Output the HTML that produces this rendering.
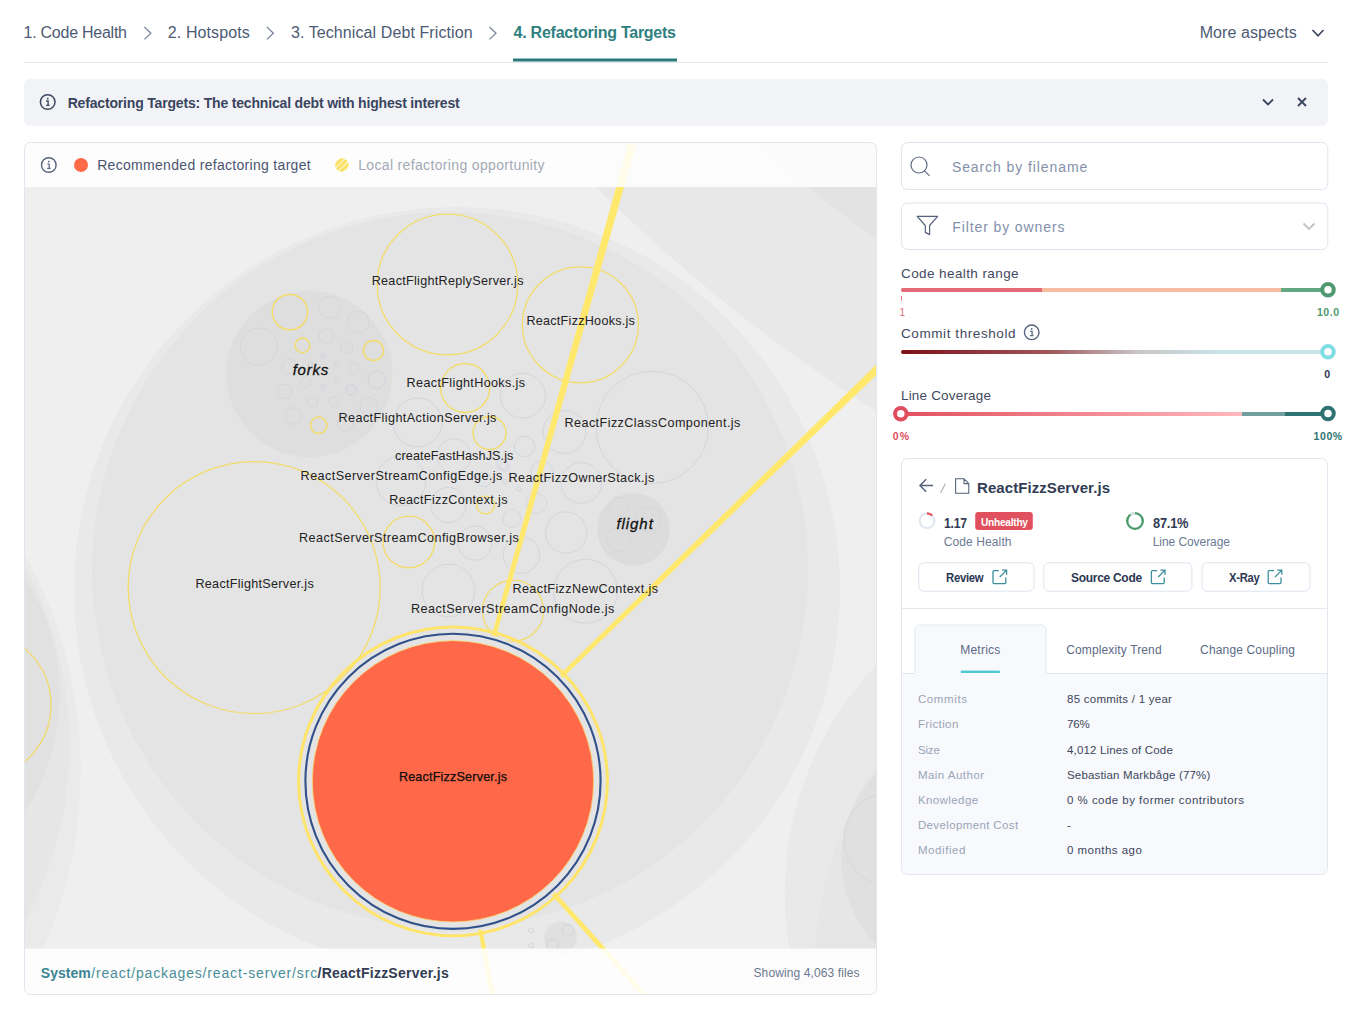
<!DOCTYPE html>
<html><head><meta charset="utf-8">
<style>
html,body{margin:0;padding:0;background:#fff;width:1352px;height:1030px;overflow:hidden;}
body{position:relative;font-family:'Liberation Sans',sans-serif;}
.t{position:absolute;white-space:pre;line-height:1;}
.abs{position:absolute;box-sizing:border-box;}
svg{position:absolute;left:0;top:0;}
</style></head><body>
<svg width="1352" height="1030" viewBox="0 0 1352 1030"><defs><clipPath id="vc"><rect x="25" y="143" width="851" height="851" rx="5"/></clipPath><pattern id="hatch" width="4.2" height="4.2" patternUnits="userSpaceOnUse" patternTransform="rotate(45)"><rect width="4.2" height="4.2" fill="#fbf0b6"/><rect width="2.4" height="4.2" fill="#fbe05a"/></pattern><linearGradient id="g2" x1="0" x2="1"><stop offset="0" stop-color="#7c1117"/><stop offset="0.35" stop-color="#a0585c"/><stop offset="0.55" stop-color="#c8c4c6"/><stop offset="0.75" stop-color="#c8e4e8"/><stop offset="1" stop-color="#c8e4e8"/></linearGradient><linearGradient id="g3" x1="0" x2="1"><stop offset="0" stop-color="#e2505f"/><stop offset="1" stop-color="#ffb8bd"/></linearGradient></defs>
<g clip-path="url(#vc)">
<rect x="25" y="143" width="851" height="851" fill="#efefef"/>
<circle cx="-366.7" cy="770" r="447.4" fill="#eaeaea"/>
<circle cx="-302.9" cy="744" r="372.7" fill="#e6e6e6"/>
<circle cx="-155.9" cy="695" r="215.7" fill="#e1e1e1"/>
<circle cx="-22.7" cy="705" r="73.7" fill="none" stroke="#f2da6a" stroke-width="1.3"/>
<circle cx="1753" cy="-975" r="1640" fill="#e8e8e8"/>
<circle cx="1753" cy="-975" r="1498" fill="#e3e3e3"/>
<circle cx="1116.1" cy="893.8" r="331.4" fill="#e9e9e9"/>
<circle cx="1225.2" cy="983.6" r="412.5" fill="#e6e6e6"/>
<circle cx="965.2" cy="858.9" r="123.9" fill="#e0e0e0"/>
<circle cx="891.7" cy="839.4" r="47.5" fill="none" stroke="#d5d6da" stroke-width="1"/>
<circle cx="457" cy="590" r="383" fill="#e9e9e9"/>
<circle cx="450" cy="570" r="358" fill="#e4e4e4"/>
<circle cx="309.4" cy="374" r="83" fill="#dedede"/>
<circle cx="633.5" cy="529.3" r="36.3" fill="#dcdcdc"/>
<circle cx="560.4" cy="937.7" r="16.3" fill="#e0e0e0"/>
<circle cx="329.4" cy="307.3" r="11" fill="none" stroke="#d3d6dd" stroke-width="1"/>
<circle cx="358.2" cy="322.1" r="11" fill="none" stroke="#d3d6dd" stroke-width="1"/>
<circle cx="258.8" cy="346.5" r="18.5" fill="none" stroke="#d3d6dd" stroke-width="1"/>
<circle cx="326" cy="335.9" r="7.3" fill="none" stroke="#d3d6dd" stroke-width="1"/>
<circle cx="346.9" cy="347.6" r="6" fill="none" stroke="#d3d6dd" stroke-width="1"/>
<circle cx="323.1" cy="356" r="2.4" fill="none" stroke="#d3d6dd" stroke-width="1"/>
<circle cx="336.7" cy="363.4" r="2.3" fill="none" stroke="#d3d6dd" stroke-width="1"/>
<circle cx="310.3" cy="364.3" r="2.5" fill="none" stroke="#d3d6dd" stroke-width="1"/>
<circle cx="289.4" cy="366.5" r="7.5" fill="none" stroke="#d3d6dd" stroke-width="1"/>
<circle cx="354.6" cy="368.7" r="5.5" fill="none" stroke="#d3d6dd" stroke-width="1"/>
<circle cx="376.8" cy="379.8" r="8.8" fill="none" stroke="#d3d6dd" stroke-width="1"/>
<circle cx="305.8" cy="382" r="5" fill="none" stroke="#d3d6dd" stroke-width="1"/>
<circle cx="336.7" cy="379.4" r="2.3" fill="none" stroke="#d3d6dd" stroke-width="1"/>
<circle cx="323.1" cy="387.1" r="2.4" fill="none" stroke="#d3d6dd" stroke-width="1"/>
<circle cx="351.3" cy="389.8" r="5.2" fill="none" stroke="#d3d6dd" stroke-width="1"/>
<circle cx="284.8" cy="391.4" r="7.3" fill="none" stroke="#d3d6dd" stroke-width="1"/>
<circle cx="312.7" cy="402" r="5" fill="none" stroke="#d3d6dd" stroke-width="1"/>
<circle cx="333.8" cy="401.6" r="5" fill="none" stroke="#d3d6dd" stroke-width="1"/>
<circle cx="368.8" cy="406.4" r="8.9" fill="none" stroke="#d3d6dd" stroke-width="1"/>
<circle cx="293.2" cy="416" r="8.3" fill="none" stroke="#d3d6dd" stroke-width="1"/>
<circle cx="345.5" cy="423.1" r="8" fill="none" stroke="#d3d6dd" stroke-width="1"/>
<circle cx="377" cy="380" r="8.6" fill="none" stroke="#d3d6dd" stroke-width="1"/>
<circle cx="351.4" cy="390" r="5.2" fill="none" stroke="#d3d6dd" stroke-width="1"/>
<circle cx="522.9" cy="395.6" r="22.5" fill="none" stroke="#d3d6dd" stroke-width="1"/>
<circle cx="417.7" cy="422.5" r="24.4" fill="none" stroke="#d3d6dd" stroke-width="1"/>
<circle cx="564.5" cy="432" r="21.4" fill="none" stroke="#d3d6dd" stroke-width="1"/>
<circle cx="652.2" cy="427.3" r="56.2" fill="none" stroke="#d3d6dd" stroke-width="1"/>
<circle cx="524.6" cy="446.6" r="10.3" fill="none" stroke="#d3d6dd" stroke-width="1"/>
<circle cx="454" cy="455.8" r="17" fill="none" stroke="#d3d6dd" stroke-width="1"/>
<circle cx="502.3" cy="464" r="5.2" fill="none" stroke="#d3d6dd" stroke-width="1"/>
<circle cx="581.2" cy="482.9" r="20.3" fill="none" stroke="#d3d6dd" stroke-width="1"/>
<circle cx="541.7" cy="471.6" r="10.7" fill="none" stroke="#d3d6dd" stroke-width="1"/>
<circle cx="401" cy="481" r="24.9" fill="none" stroke="#d3d6dd" stroke-width="1"/>
<circle cx="483.8" cy="479.5" r="7.4" fill="none" stroke="#d3d6dd" stroke-width="1"/>
<circle cx="505.3" cy="481.7" r="2.2" fill="none" stroke="#d3d6dd" stroke-width="1"/>
<circle cx="518.6" cy="489" r="2.2" fill="none" stroke="#d3d6dd" stroke-width="1"/>
<circle cx="448.5" cy="505" r="17.6" fill="none" stroke="#d3d6dd" stroke-width="1"/>
<circle cx="536.3" cy="503.6" r="10.3" fill="none" stroke="#d3d6dd" stroke-width="1"/>
<circle cx="511.8" cy="518.6" r="9" fill="none" stroke="#d3d6dd" stroke-width="1"/>
<circle cx="566.2" cy="532.5" r="20.7" fill="none" stroke="#d3d6dd" stroke-width="1"/>
<circle cx="474.9" cy="543.1" r="17" fill="none" stroke="#d3d6dd" stroke-width="1"/>
<circle cx="521.4" cy="555" r="18.2" fill="none" stroke="#d3d6dd" stroke-width="1"/>
<circle cx="448.5" cy="590.5" r="26.4" fill="none" stroke="#d3d6dd" stroke-width="1"/>
<circle cx="585.5" cy="591.2" r="32" fill="none" stroke="#d3d6dd" stroke-width="1"/>
<circle cx="504.3" cy="466.2" r="4.7" fill="none" stroke="#d3d6dd" stroke-width="1"/>
<circle cx="618.6" cy="506.4" r="9.2" fill="none" stroke="#d3d6dd" stroke-width="1"/>
<circle cx="648.5" cy="519" r="12.2" fill="none" stroke="#d3d6dd" stroke-width="1"/>
<circle cx="618.6" cy="539.3" r="12.2" fill="none" stroke="#d3d6dd" stroke-width="1"/>
<circle cx="568" cy="930.4" r="6" fill="none" stroke="#d3d6dd" stroke-width="1"/>
<circle cx="552.3" cy="945" r="5.8" fill="none" stroke="#d3d6dd" stroke-width="1"/>
<circle cx="531.2" cy="930.4" r="2.4" fill="none" stroke="#d3d6dd" stroke-width="1"/>
<circle cx="531.2" cy="945.8" r="2.4" fill="none" stroke="#d3d6dd" stroke-width="1"/>
<circle cx="447.5" cy="284.5" r="70.3" fill="none" stroke="#f3dc6b" stroke-width="1.3"/>
<circle cx="580.4" cy="324.8" r="58" fill="none" stroke="#f3dc6b" stroke-width="1.3"/>
<circle cx="254.2" cy="587.6" r="126" fill="none" stroke="#f3dc6b" stroke-width="1.3"/>
<circle cx="289.9" cy="312.1" r="17.7" fill="none" stroke="#f3dc6b" stroke-width="1.5"/>
<circle cx="302.5" cy="345.4" r="7.3" fill="none" stroke="#f3dc6b" stroke-width="1.5"/>
<circle cx="373.5" cy="350.5" r="10" fill="none" stroke="#f3dc6b" stroke-width="1.5"/>
<circle cx="318.7" cy="425.3" r="8.2" fill="none" stroke="#f3dc6b" stroke-width="1.5"/>
<circle cx="465.2" cy="388" r="24.5" fill="none" stroke="#f3dc6b" stroke-width="1.4"/>
<circle cx="489.5" cy="433" r="16.5" fill="none" stroke="#f3dc6b" stroke-width="1.4"/>
<circle cx="485.5" cy="505" r="8.9" fill="none" stroke="#f3dc6b" stroke-width="1.4"/>
<circle cx="408.8" cy="541.9" r="25.8" fill="none" stroke="#f3dc6b" stroke-width="1.4"/>
<circle cx="513" cy="610.7" r="30.5" fill="none" stroke="#f3dc6b" stroke-width="1.3"/>
<polygon points="454.64,781.76 728.62,-179.98 718.81,-182.74 451.36,780.84" fill="#ffe86c"/>
<polygon points="454.19,782.52 1173.51,87.83 1166.40,80.52 451.81,780.08" fill="#ffe86c"/>
<polygon points="451.33,781.61 629.19,1765.67 639.23,1763.82 454.67,780.99" fill="#ffe86c"/>
<polygon points="451.73,782.43 1116.26,1529.70 1123.86,1522.90 454.27,780.17" fill="#ffe86c"/>
<circle cx="453" cy="781.3" r="154.4" fill="none" stroke="#ffe46a" stroke-width="3"/>
<circle cx="453" cy="781.3" r="151" fill="#e4e4e4"/>
<circle cx="453" cy="781.3" r="147.6" fill="none" stroke="#30518a" stroke-width="2.1"/>
<circle cx="453" cy="781.3" r="140.6" fill="#ff6848" stroke="#f7d36a" stroke-width="0.8"/>
</g>
<rect x="25" y="143" width="851" height="44" fill="#ffffff" fill-opacity="0.86"/>
<rect x="25" y="948.5" width="851" height="46" fill="#ffffff" fill-opacity="0.86"/>
<rect x="24.5" y="142.5" width="852" height="852" rx="6" fill="none" stroke="#e1e6ee" stroke-width="1"/>
<circle cx="48.8" cy="165" r="7.3" fill="none" stroke="#56637c" stroke-width="1.4"/>
<circle cx="48.8" cy="161.6" r="0.9" fill="#56637c"/><path d="M47.3 164 H49.2 V168.2 M47.2 168.4 H50.6" fill="none" stroke="#56637c" stroke-width="1.2"/>
<circle cx="81" cy="165" r="7" fill="#ff6a48"/>
<circle cx="341.9" cy="165" r="6.8" fill="url(#hatch)"/><path d="M144.39999999999998 27 L150.89999999999998 33.2 L144.39999999999998 39.4" fill="none" stroke="#7c879b" stroke-width="1.3"/>
<path d="M266.9 27 L273.4 33.2 L266.9 39.4" fill="none" stroke="#7c879b" stroke-width="1.3"/>
<path d="M489.5 27 L496.0 33.2 L489.5 39.4" fill="none" stroke="#7c879b" stroke-width="1.3"/>
<rect x="513" y="58.5" width="164" height="3" fill="#2b7a7b"/>
<rect x="24" y="62" width="1304" height="1" fill="#e3e8f0"/>
<path d="M1312.5 30 L1318 35.8 L1323.5 30" fill="none" stroke="#3d4860" stroke-width="1.7"/>
<rect x="24" y="79" width="1304" height="47" rx="6" fill="#f1f3f7"/>
<circle cx="47.7" cy="102" r="7.3" fill="none" stroke="#3d4860" stroke-width="1.5"/>
<circle cx="47.7" cy="98.6" r="0.95" fill="#3d4860"/><path d="M46.2 101 H48.1 V105.2 M46.1 105.4 H49.5" fill="none" stroke="#3d4860" stroke-width="1.3"/>
<path d="M1263 99.5 L1268 104.5 L1273 99.5" fill="none" stroke="#3a4560" stroke-width="1.8"/>
<path d="M1298 98 L1306 106 M1306 98 L1298 106" fill="none" stroke="#3a4560" stroke-width="1.8"/>
<rect x="901.5" y="142.5" width="426.3" height="47" rx="6" fill="#fff" stroke="#dfe4ee"/>
<circle cx="919" cy="165" r="8" fill="none" stroke="#5f6b84" stroke-width="1.2"/>
<path d="M924.6 170.8 L929.6 175.8" stroke="#5f6b84" stroke-width="1.2"/>
<rect x="901.5" y="203" width="426.3" height="46.5" rx="6" fill="#fff" stroke="#dfe4ee"/>
<path d="M917.2 216.3 H937.6 L929.6 225.5 V234.6 L925.3 232.4 V225.5 Z" fill="none" stroke="#56637c" stroke-width="1.2" stroke-linejoin="round"/>
<path d="M1303.5 223.5 L1309 229 L1314.5 223.5" fill="none" stroke="#c2c2c2" stroke-width="1.8"/>
<rect x="901" y="288" width="427" height="4" rx="2" fill="#f6bda1"/>
<rect x="901" y="288" width="141" height="4" rx="2" fill="#e46a78"/><rect x="1038" y="288" width="4" height="4" fill="#e46a78"/>
<rect x="1281" y="288" width="47" height="4" fill="#62a77f"/>
<rect x="901" y="296" width="1" height="4.5" fill="#e46a78"/>
<circle cx="1328" cy="289.7" r="5.75" fill="#fff" stroke="#4e9a6e" stroke-width="4"/>
<rect x="901" y="350" width="427" height="4" rx="2" fill="url(#g2)"/>
<circle cx="1328" cy="351.8" r="5.75" fill="#fff" stroke="#80dde3" stroke-width="4"/>
<circle cx="1031.7" cy="332.3" r="7.3" fill="none" stroke="#56637c" stroke-width="1.4"/>
<circle cx="1031.7" cy="328.9" r="0.9" fill="#56637c"/><path d="M1030.2 331.3 H1032.1 V335.5 M1030.1 335.7 H1033.5" fill="none" stroke="#56637c" stroke-width="1.2"/>
<rect x="901" y="412" width="341" height="4" fill="url(#g3)"/>
<rect x="1242" y="412" width="43" height="4" fill="#72a0a0"/>
<rect x="1285" y="412" width="43" height="4" fill="#2e7474"/>
<circle cx="900.8" cy="413.8" r="5.75" fill="#fff" stroke="#e04e5e" stroke-width="4"/>
<circle cx="1328" cy="413.6" r="5.75" fill="#fff" stroke="#2e7272" stroke-width="4"/>
<rect x="901.5" y="458.5" width="426" height="416" rx="6" fill="#fff" stroke="#e1e6ef"/>
<path d="M902 673.5 H1327 V868 a6 6 0 0 1 -6 6 H908 a6 6 0 0 1 -6 -6 Z" fill="#f8f9fc"/>
<rect x="901" y="608" width="427" height="1" fill="#e3e8f0"/>
<path d="M915 673 V630 a5 5 0 0 1 5 -5 H1041 a5 5 0 0 1 5 5 V673" fill="#f8f9fc" stroke="#e1e6ef"/>
<path d="M901.5 673.5 H915 M1046 673.5 H1327" stroke="#e1e6ef"/>
<rect x="960.8" y="670.6" width="39" height="2.4" fill="#4ec8cf"/>
<path d="M920 485.5 H933 M926.2 479.3 L920 485.5 L926.2 491.7" fill="none" stroke="#56637c" stroke-width="1.5"/>
<path d="M945.5 483.5 L940.5 493" stroke="#a9b0be" stroke-width="1.1"/>
<path d="M955.6 478.8 H964 L968.8 483.6 V493.3 H955.6 Z M964 478.8 V483.6 H968.8" fill="none" stroke="#56637c" stroke-width="1.1" stroke-linejoin="round"/>
<circle cx="927" cy="520.7" r="7.4" fill="none" stroke="#e3e8f0" stroke-width="2.2"/>
<path d="M927 513.3 A7.4 7.4 0 0 1 932.2 515.5" fill="none" stroke="#e5525e" stroke-width="2.2"/>
<circle cx="1135" cy="521" r="7.8" fill="none" stroke="#4a9a6a" stroke-width="2.3"/>
<path d="M1130.5 514.6 A7.8 7.8 0 0 1 1135 513.2" fill="none" stroke="#e3e8f0" stroke-width="2.3"/>
<rect x="975.2" y="512" width="57.6" height="18" rx="3" fill="#e0505e"/>
<rect x="918.8" y="562.8" width="115.20000000000005" height="28.4" rx="5" fill="#fff" stroke="#dfe4ee"/>
<rect x="1043.8" y="562.8" width="148.10000000000014" height="28.4" rx="5" fill="#fff" stroke="#dfe4ee"/>
<rect x="1202.0" y="562.8" width="107.90000000000009" height="28.4" rx="5" fill="#fff" stroke="#dfe4ee"/>
<path d="M998.8 570.6 H994.0 a1 1 0 0 0 -1 1 V582.6 a1 1 0 0 0 1 1 H1004.8 a1 1 0 0 0 1 -1 V577.5 M999.8 577 L1006.4 570.4 M1002.0 570.2 H1006.5999999999999 V574.8" fill="none" stroke="#3d8f9b" stroke-width="1.3"/>
<path d="M1157.2 570.6 H1152.4 a1 1 0 0 0 -1 1 V582.6 a1 1 0 0 0 1 1 H1163.2 a1 1 0 0 0 1 -1 V577.5 M1158.2 577 L1164.8 570.4 M1160.4 570.2 H1165.0 V574.8" fill="none" stroke="#3d8f9b" stroke-width="1.3"/>
<path d="M1274 570.6 H1269.2 a1 1 0 0 0 -1 1 V582.6 a1 1 0 0 0 1 1 H1280 a1 1 0 0 0 1 -1 V577.5 M1275 577 L1281.6 570.4 M1277.2 570.2 H1281.8 V574.8" fill="none" stroke="#3d8f9b" stroke-width="1.3"/></svg>
<div class="t" style="left:23.50px;top:25.00px;font-size:16px;color:#4d5a73;letter-spacing:-0.249px;">1. Code Health</div>
<div class="t" style="left:167.80px;top:25.00px;font-size:16px;color:#4d5a73;letter-spacing:0.106px;">2. Hotspots</div>
<div class="t" style="left:290.90px;top:25.00px;font-size:16px;color:#4d5a73;letter-spacing:0.094px;">3. Technical Debt Friction</div>
<div class="t" style="left:513.60px;top:25.00px;font-size:16px;color:#2f7f80;letter-spacing:-0.255px;font-weight:700;">4. Refactoring Targets</div>
<div class="t" style="left:1199.70px;top:25.00px;font-size:16px;color:#4d5a73;letter-spacing:0.087px;">More aspects</div>
<div class="t" style="left:67.70px;top:96.00px;font-size:14px;color:#3a4560;letter-spacing:-0.178px;font-weight:700;">Refactoring Targets: The technical debt with highest interest</div>
<div class="t" style="left:97.20px;top:158.00px;font-size:14px;color:#4a5670;letter-spacing:0.304px;">Recommended refactoring target</div>
<div class="t" style="left:358.20px;top:158.00px;font-size:14px;color:#a3a9b6;letter-spacing:0.344px;">Local refactoring opportunity</div>
<div class="t" style="left:40.80px;top:966.00px;font-size:14px;color:#3b8592;letter-spacing:0.037px;font-weight:700;">System</div>
<div class="t" style="left:91.20px;top:966.00px;font-size:14px;color:#4a8e99;letter-spacing:0.840px;">/react/packages/react-server/src</div>
<div class="t" style="left:317.50px;top:966.00px;font-size:14px;color:#313c52;letter-spacing:0.241px;font-weight:700;">/ReactFizzServer.js</div>
<div class="t" style="left:753.50px;top:967.00px;font-size:12px;color:#6b7890;letter-spacing:0.107px;">Showing 4,063 files</div>
<div class="t" style="left:371.70px;top:275.00px;font-size:12.6px;color:#222222;letter-spacing:0.288px;">ReactFlightReplyServer.js</div>
<div class="t" style="left:526.40px;top:315.00px;font-size:12.6px;color:#222222;letter-spacing:0.264px;">ReactFizzHooks.js</div>
<div class="t" style="left:292.70px;top:362.00px;font-size:15px;color:#111111;letter-spacing:0.746px;font-style:italic;-webkit-text-stroke:0.3px #111;">forks</div>
<div class="t" style="left:406.60px;top:377.00px;font-size:12.6px;color:#222222;letter-spacing:0.356px;">ReactFlightHooks.js</div>
<div class="t" style="left:338.60px;top:412.00px;font-size:12.6px;color:#222222;letter-spacing:0.404px;">ReactFlightActionServer.js</div>
<div class="t" style="left:564.50px;top:417.00px;font-size:12.6px;color:#222222;letter-spacing:0.428px;">ReactFizzClassComponent.js</div>
<div class="t" style="left:395.10px;top:450.00px;font-size:12.6px;color:#222222;letter-spacing:0.117px;">createFastHashJS.js</div>
<div class="t" style="left:300.60px;top:470.00px;font-size:12.6px;color:#222222;letter-spacing:0.438px;">ReactServerStreamConfigEdge.js</div>
<div class="t" style="left:508.50px;top:472.00px;font-size:12.6px;color:#222222;letter-spacing:0.411px;">ReactFizzOwnerStack.js</div>
<div class="t" style="left:389.20px;top:494.00px;font-size:12.6px;color:#222222;letter-spacing:0.351px;">ReactFizzContext.js</div>
<div class="t" style="left:616.50px;top:516.00px;font-size:15px;color:#111111;letter-spacing:0.922px;font-style:italic;-webkit-text-stroke:0.3px #111;">flight</div>
<div class="t" style="left:299.00px;top:532.00px;font-size:12.6px;color:#222222;letter-spacing:0.460px;">ReactServerStreamConfigBrowser.js</div>
<div class="t" style="left:195.40px;top:578.00px;font-size:12.6px;color:#222222;letter-spacing:0.295px;">ReactFlightServer.js</div>
<div class="t" style="left:512.40px;top:583.00px;font-size:12.6px;color:#222222;letter-spacing:0.405px;">ReactFizzNewContext.js</div>
<div class="t" style="left:410.90px;top:603.00px;font-size:12.6px;color:#222222;letter-spacing:0.473px;">ReactServerStreamConfigNode.js</div>
<div class="t" style="left:398.90px;top:771.00px;font-size:12.6px;color:#0c0c0c;letter-spacing:0.183px;-webkit-text-stroke:0.25px #0c0c0c;">ReactFizzServer.js</div>
<div class="t" style="left:951.90px;top:160.00px;font-size:14px;color:#8390ab;letter-spacing:0.915px;">Search by filename</div>
<div class="t" style="left:952.20px;top:220.00px;font-size:14px;color:#8390ab;letter-spacing:0.899px;">Filter by owners</div>
<div class="t" style="left:901.00px;top:267.00px;font-size:13.5px;color:#3f4a60;letter-spacing:0.407px;">Code health range</div>
<div class="t" style="left:901.00px;top:327.00px;font-size:13.5px;color:#3f4a60;letter-spacing:0.580px;">Commit threshold</div>
<div class="t" style="left:901.00px;top:389.00px;font-size:13.5px;color:#3f4a60;letter-spacing:0.182px;">Line Coverage</div>
<div class="t" style="left:899.60px;top:308.00px;font-size:10px;color:#e46a78;">1</div>
<div class="t" style="left:1317.00px;top:307.00px;font-size:10.5px;color:#4e9a6e;letter-spacing:0.521px;font-weight:700;">10.0</div>
<div class="t" style="left:1324.30px;top:369.00px;font-size:10.5px;color:#2d3650;font-weight:700;">0</div>
<div class="t" style="left:892.80px;top:431.00px;font-size:10.5px;color:#e04e5e;letter-spacing:1.000px;font-weight:700;">0%</div>
<div class="t" style="left:1313.60px;top:431.00px;font-size:10.5px;color:#2e7474;letter-spacing:0.580px;font-weight:700;">100%</div>
<div class="t" style="left:977.00px;top:480.00px;font-size:15px;color:#323c55;letter-spacing:0.074px;font-weight:700;">ReactFizzServer.js</div>
<div class="t" style="left:943.80px;top:515.00px;font-size:15px;color:#323c55;letter-spacing:-0.300px;transform:scaleX(0.8162);transform-origin:0 0;font-weight:700;">1.17</div>
<div class="t" style="left:980.70px;top:517.00px;font-size:11px;color:#ffffff;letter-spacing:-0.300px;transform:scaleX(0.9254);transform-origin:0 0;font-weight:700;">Unhealthy</div>
<div class="t" style="left:943.80px;top:536.00px;font-size:12px;color:#6c7a94;letter-spacing:0.098px;">Code Health</div>
<div class="t" style="left:1152.70px;top:515.00px;font-size:15px;color:#323c55;letter-spacing:-0.300px;transform:scaleX(0.8586);transform-origin:0 0;font-weight:700;">87.1%</div>
<div class="t" style="left:1152.70px;top:536.00px;font-size:12px;color:#6c7a94;letter-spacing:-0.064px;">Line Coverage</div>
<div class="t" style="left:946.30px;top:572.00px;font-size:12px;color:#2c3752;letter-spacing:-0.300px;transform:scaleX(0.9458);transform-origin:0 0;font-weight:700;">Review</div>
<div class="t" style="left:1071.00px;top:572.00px;font-size:12px;color:#2c3752;letter-spacing:-0.292px;font-weight:700;">Source Code</div>
<div class="t" style="left:1229.20px;top:572.00px;font-size:12px;color:#2c3752;letter-spacing:-0.300px;transform:scaleX(0.9325);transform-origin:0 0;font-weight:700;">X-Ray</div>
<div class="t" style="left:960.20px;top:644.00px;font-size:12px;color:#5b6a85;letter-spacing:0.238px;">Metrics</div>
<div class="t" style="left:1066.20px;top:644.00px;font-size:12px;color:#5b6a85;letter-spacing:0.135px;">Complexity Trend</div>
<div class="t" style="left:1200.10px;top:644.00px;font-size:12px;color:#5b6a85;letter-spacing:0.154px;">Change Coupling</div>
<div class="t" style="left:917.90px;top:694.00px;font-size:11.5px;color:#9aa4b8;letter-spacing:0.621px;">Commits</div>
<div class="t" style="left:1067.00px;top:694.00px;font-size:11.5px;color:#3c465c;letter-spacing:0.253px;">85 commits / 1 year</div>
<div class="t" style="left:917.90px;top:719.00px;font-size:11.5px;color:#9aa4b8;letter-spacing:0.385px;">Friction</div>
<div class="t" style="left:1067.00px;top:719.00px;font-size:11.5px;color:#3c465c;letter-spacing:-0.166px;">76%</div>
<div class="t" style="left:917.90px;top:745.00px;font-size:11.5px;color:#9aa4b8;letter-spacing:-0.158px;">Size</div>
<div class="t" style="left:1067.00px;top:745.00px;font-size:11.5px;color:#3c465c;letter-spacing:0.158px;">4,012 Lines of Code</div>
<div class="t" style="left:917.90px;top:770.00px;font-size:11.5px;color:#9aa4b8;letter-spacing:0.483px;">Main Author</div>
<div class="t" style="left:1067.00px;top:770.00px;font-size:11.5px;color:#3c465c;letter-spacing:0.171px;">Sebastian Markbåge (77%)</div>
<div class="t" style="left:917.90px;top:795.00px;font-size:11.5px;color:#9aa4b8;letter-spacing:0.412px;">Knowledge</div>
<div class="t" style="left:1067.00px;top:795.00px;font-size:11.5px;color:#3c465c;letter-spacing:0.470px;">0 % code by former contributors</div>
<div class="t" style="left:917.90px;top:820.00px;font-size:11.5px;color:#9aa4b8;letter-spacing:0.373px;">Development Cost</div>
<div class="t" style="left:1067.00px;top:820.00px;font-size:11.5px;color:#3c465c;">-</div>
<div class="t" style="left:917.90px;top:845.00px;font-size:11.5px;color:#9aa4b8;letter-spacing:0.590px;">Modified</div>
<div class="t" style="left:1067.00px;top:845.00px;font-size:11.5px;color:#3c465c;letter-spacing:0.465px;">0 months ago</div>
</body></html>
